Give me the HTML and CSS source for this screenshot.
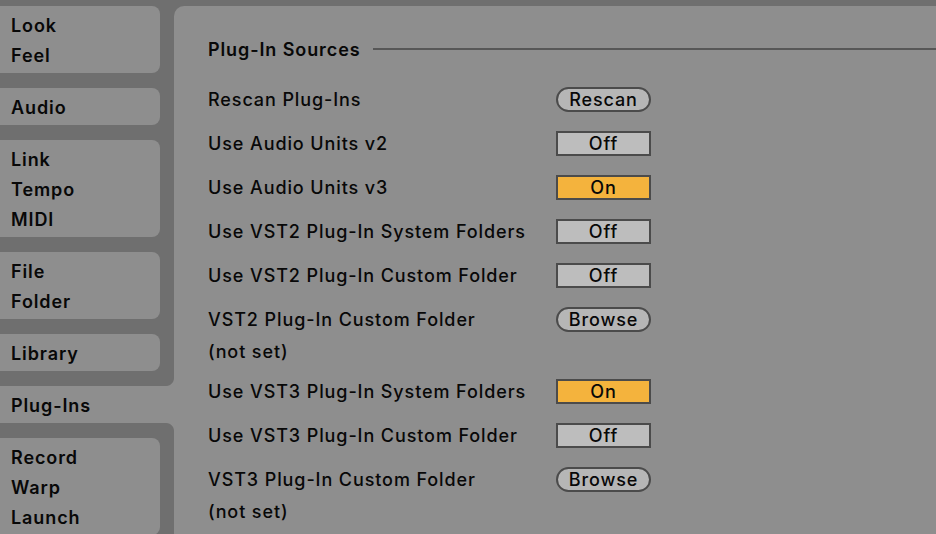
FILE: index.html
```html
<!DOCTYPE html>
<html lang="en">
<head>
<meta charset="utf-8">
<title>Preferences – Plug-Ins</title>
<link rel="stylesheet" href="styles.css">
</head>
<body>
<div class="window">
  <nav class="sidebar">
    <div class="tab"><div>Look</div><div>Feel</div></div>
    <div class="tab"><div>Audio</div></div>
    <div class="tab"><div>Link</div><div>Tempo</div><div>MIDI</div></div>
    <div class="tab"><div>File</div><div>Folder</div></div>
    <div class="tab"><div>Library</div></div>
    <div class="tab active"><div>Plug-Ins</div></div>
    <div class="tab"><div>Record</div><div>Warp</div><div>Launch</div></div>
  </nav>
  <main class="panel">
    <div class="section-head">
      <span class="section-title">Plug-In Sources</span>
      <span class="section-rule"></span>
    </div>
    <div class="rows">
      <div class="row">
        <div class="label">Rescan Plug-Ins</div>
        <div class="ctrl"><button class="pill">Rescan</button></div>
      </div>
      <div class="row">
        <div class="label">Use Audio Units v2</div>
        <div class="ctrl"><button class="toggle">Off</button></div>
      </div>
      <div class="row">
        <div class="label">Use Audio Units v3</div>
        <div class="ctrl"><button class="toggle on">On</button></div>
      </div>
      <div class="row">
        <div class="label">Use VST2 Plug-In System Folders</div>
        <div class="ctrl"><button class="toggle">Off</button></div>
      </div>
      <div class="row">
        <div class="label">Use VST2 Plug-In Custom Folder</div>
        <div class="ctrl"><button class="toggle">Off</button></div>
      </div>
      <div class="row">
        <div class="label">VST2 Plug-In Custom Folder<div class="note">(not set)</div></div>
        <div class="ctrl"><button class="pill">Browse</button></div>
      </div>
      <div class="row">
        <div class="label">Use VST3 Plug-In System Folders</div>
        <div class="ctrl"><button class="toggle on">On</button></div>
      </div>
      <div class="row">
        <div class="label">Use VST3 Plug-In Custom Folder</div>
        <div class="ctrl"><button class="toggle">Off</button></div>
      </div>
      <div class="row">
        <div class="label">VST3 Plug-In Custom Folder<div class="note">(not set)</div></div>
        <div class="ctrl"><button class="pill">Browse</button></div>
      </div>
    </div>
  </main>
</div>
</body>
</html>
```
FILE: styles.css
```css
:root {
  --dark: #6f6f6f;
  --light: #8e8e8e;
  --ink: #080808;
}
* { box-sizing: border-box; }
html, body {
  margin: 0;
  height: 100%;
  overflow: hidden;
}
body {
  background: var(--dark);
  font-family: Inter, "Noto Sans", "Liberation Sans", sans-serif;
  font-size: 18px;
  font-weight: 500;
  letter-spacing: 0.9px;
  color: var(--ink);
}
.window {
  display: flex;
  padding-top: 6px;
  height: 534px;
}
.sidebar {
  width: 174px;
  flex: none;
  display: flex;
  flex-direction: column;
  gap: 15px;
}
.tab {
  width: 160px;
  background: var(--light);
  border-radius: 0 8px 8px 0;
  padding: 5px 0 2px 11px;
  font-weight: 600;
  line-height: 30px;
  flex: none;
}
.tab.active {
  width: 174px;
  border-radius: 0;
  position: relative;
}
.tab.active::before,
.tab.active::after {
  content: "";
  position: absolute;
  right: 0;
  width: 8px;
  height: 8px;
}
.tab.active::before {
  top: -8px;
  background: radial-gradient(circle at 0 0, var(--dark) 7.5px, var(--light) 8.5px);
}
.tab.active::after {
  bottom: -8px;
  background: radial-gradient(circle at 0 100%, var(--dark) 7.5px, var(--light) 8.5px);
}
.panel {
  flex: 1;
  background: var(--light);
  border-top-left-radius: 10px;
  padding: 29px 0 0 34px;
}
.section-head {
  display: flex;
  align-items: center;
  height: 28px;
  margin-bottom: 14px;
}
.section-title {
  font-weight: 600;
  margin-top: 1px;
}
.section-rule {
  flex: 1;
  height: 2px;
  background: #575757;
  margin-left: 13px;
}
.row {
  display: grid;
  grid-template-columns: 348px auto;
  align-items: start;
}
.label {
  line-height: 44px;
  margin-top: 1px;
  margin-bottom: -1px;
}
.note {
  line-height: 20px;
  margin-bottom: 8px;
}
.ctrl {
  height: 44px;
  display: flex;
  align-items: center;
}
button {
  font: inherit;
  letter-spacing: inherit;
  color: var(--ink);
  width: 95px;
  height: 25px;
  padding: 1px 0 0;
  line-height: 20px;
  border: 2px solid #4b4b4b;
  cursor: default;
}
.pill {
  background: #b6b6b6;
  border-radius: 12.5px;
}
.toggle {
  background: #bdbdbd;
  border-radius: 0;
}
.toggle.on {
  background: #f4b33d;
}
```
